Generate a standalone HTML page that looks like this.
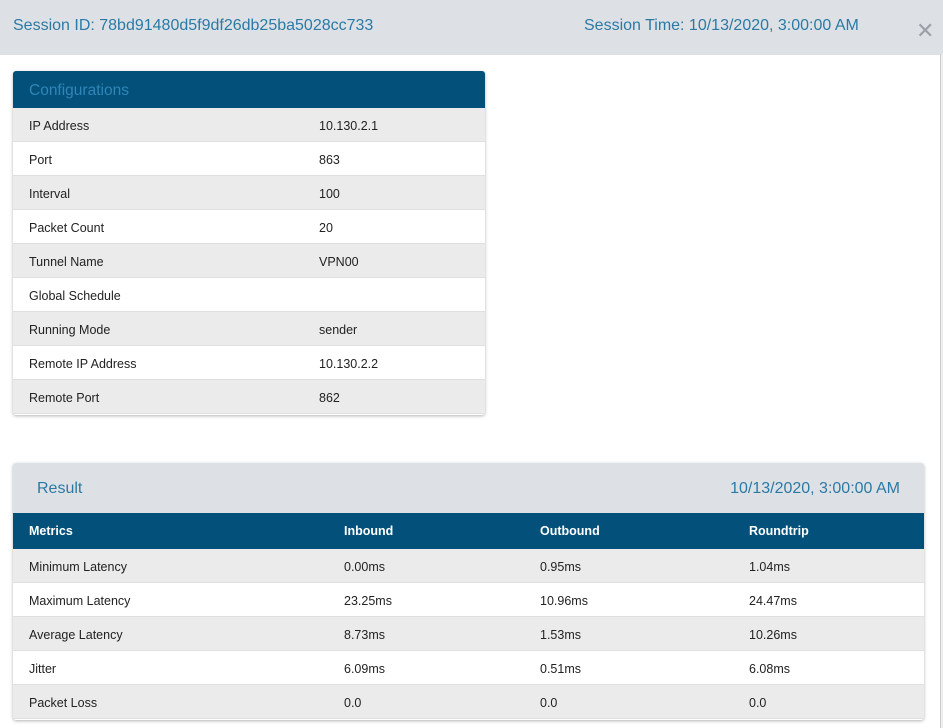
<!DOCTYPE html>
<html><head><style>
*{margin:0;padding:0;box-sizing:border-box}
body{width:943px;height:728px;overflow:hidden;background:#fff;font-family:"Liberation Sans",sans-serif;position:relative}
.top{position:absolute;left:0;top:0;width:943px;height:55px;background:#dde1e5}
.top span{position:absolute;top:17px;font-size:16px;color:#2b7aa5}
.x{position:absolute;left:916px;top:18px;font-size:22px;color:#9aa0a6;font-weight:300}
.sb{position:absolute;left:940px;top:55px;width:3px;height:673px;background:#eee;border-left:1px solid #ccc}
.card{position:absolute;background:#fff;box-shadow:0 1px 3px rgba(0,0,0,.3);border-radius:3px;overflow:hidden}
.row{height:34px;display:flex;align-items:center;font-size:12.5px;color:#222;border-bottom:1px solid #e0e0e0;padding-top:2px}
.row:nth-child(odd){background:#ebebeb}
.c1{position:absolute;left:13px;top:71px;width:472px;height:344px}
.c1 .h{height:37px;background:#03507a;color:#2f86b8;font-size:15.5px;padding:11px 0 0 16px}
.c1 .row span:first-child{width:306px;padding-left:16px}
.c2{position:absolute;left:13px;top:463px;width:911px;height:257px}
.c2 .h{height:50px;background:#dde1e5;color:#2b7aa5;font-size:16px;position:relative}
.c2 .h span{position:absolute;top:17px}
.th{height:36px;background:#03507a;color:#fff;font-weight:bold;font-size:12.5px;display:flex;align-items:center}
.c2 .row span,.th span{display:block}
.a{width:331px;padding-left:16px}.b{width:196px}.c{width:209px}
</style></head><body>
<div class="top"><span style="left:13px">Session ID: 78bd91480d5f9df26db25ba5028cc733</span><span style="left:584px">Session Time: 10/13/2020, 3:00:00 AM</span></div>
<div class="x">✕</div>
<div class="sb"></div>
<div class="card c1"><div class="h">Configurations</div>
<div>
<div class="row"><span>IP Address</span><span>10.130.2.1</span></div>
<div class="row" style="background:#fff"><span>Port</span><span>863</span></div>
<div class="row"><span>Interval</span><span>100</span></div>
<div class="row" style="background:#fff"><span>Packet Count</span><span>20</span></div>
<div class="row"><span>Tunnel Name</span><span>VPN00</span></div>
<div class="row" style="background:#fff"><span>Global Schedule</span><span></span></div>
<div class="row"><span>Running Mode</span><span>sender</span></div>
<div class="row" style="background:#fff"><span>Remote IP Address</span><span>10.130.2.2</span></div>
<div class="row"><span>Remote Port</span><span>862</span></div>
</div></div>
<div class="card c2"><div class="h"><span style="left:24px">Result</span><span style="right:24px">10/13/2020, 3:00:00 AM</span></div>
<div class="th"><span class="a">Metrics</span><span class="b">Inbound</span><span class="c">Outbound</span><span>Roundtrip</span></div>
<div>
<div class="row"><span class="a">Minimum Latency</span><span class="b">0.00ms</span><span class="c">0.95ms</span><span>1.04ms</span></div>
<div class="row" style="background:#fff"><span class="a">Maximum Latency</span><span class="b">23.25ms</span><span class="c">10.96ms</span><span>24.47ms</span></div>
<div class="row"><span class="a">Average Latency</span><span class="b">8.73ms</span><span class="c">1.53ms</span><span>10.26ms</span></div>
<div class="row" style="background:#fff"><span class="a">Jitter</span><span class="b">6.09ms</span><span class="c">0.51ms</span><span>6.08ms</span></div>
<div class="row"><span class="a">Packet Loss</span><span class="b">0.0</span><span class="c">0.0</span><span>0.0</span></div>
</div></div>
</body></html>
